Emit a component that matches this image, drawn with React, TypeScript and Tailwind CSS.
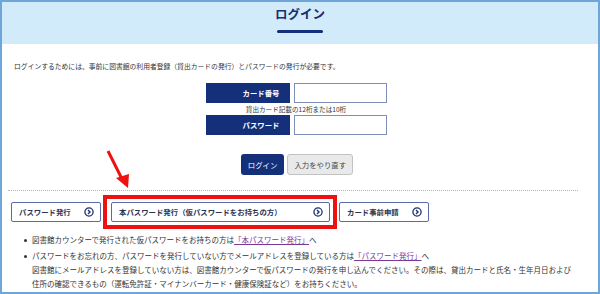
import { ReactNode } from "react";

const navy = "bg-[#15307a]";

function CircleArrow() {
	return (
		<svg width="10" height="10" viewBox="0 0 10 10" className="shrink-0">
			<circle cx="5" cy="5" r="4.1" fill="none" stroke="#1d2f6f" strokeWidth="1.3" />
			<path d="M4 3 L6 5 L4 7" fill="none" stroke="#1d2f6f" strokeWidth="1.4" />
		</svg>
	);
}

function TabButton({ label, className }: { label: string; className: string }) {
	return (
		<div
			className={`h-[20px] flex items-center justify-between border border-[#5a6aa8] rounded-[2px] bg-white pl-[7px] pr-[6px] ${className}`}
		>
			<span className="text-[7.4px] font-bold text-[#2b3352]">{label}</span>
			<CircleArrow />
		</div>
	);
}

function FormRow({ label }: { label: string }) {
	return (
		<div className="flex items-center gap-[4px]">
			<div className={`w-[84px] h-[20px] ${navy} flex items-center justify-end pr-[10px]`}>
				<span className="text-[7.4px] font-bold text-white">{label}</span>
			</div>
			<div className="w-[93px] h-[20px] border border-[#7d8fb8] bg-white" />
		</div>
	);
}

function Bullet({ children }: { children: ReactNode }) {
	return (
		<li className="flex gap-[5px]">
			<span className="w-[3px] h-[3px] rounded-full bg-[#333] mt-[6px] shrink-0" />
			<div>{children}</div>
		</li>
	);
}

function Link({ children }: { children: ReactNode }) {
	return <span className="text-[#7b3a96] underline">{children}</span>;
}

export default function App() {
	return (
		<div
			className="w-[600px] h-[294px] overflow-hidden bg-white border-2 border-[#6ea6da] text-[#333] flex flex-col"
			style={{ fontFamily: '"Noto Sans CJK JP", "Noto Sans", sans-serif' }}
		>
			{/* Header */}
			<div className="h-[42px] bg-[#d1ebfb] flex flex-col items-center pt-[3px] shrink-0">
				<h1 className="text-[12.5px] font-bold text-[#1a2f6e] leading-[18px]">ログイン</h1>
				<div className="w-[46px] h-[3px] rounded-full bg-[#15307a] mt-[7px]" />
			</div>

			<p className="text-[6.8px] leading-[10px] mt-[17px] ml-[12px]">
				ログインするためには、事前に図書館の利用者登録（貸出カードの発行）とパスワードの発行が必要です。
			</p>

			{/* Form */}
			<div className="flex flex-col items-center mt-[12px] ml-[-8px]">
				<FormRow label="カード番号" />
				<p className="text-[6.6px] leading-[10px] my-[1px]">貸出カード記載の12桁または10桁</p>
				<FormRow label="パスワード" />
				<div className="flex gap-[3px] mt-[19px] ml-[2px]">
					<button className={`h-[21px] px-[7px] rounded-[3px] ${navy} text-white text-[7.4px]`}>
						ログイン
					</button>
					<button className="h-[21px] px-[6px] rounded-[3px] bg-[#e9e9e9] border border-[#c2c2c2] text-[#444] text-[7.4px]">
						入力をやり直す
					</button>
				</div>
			</div>

			{/* Divider */}
			<div className="ml-[6px] mr-[20px] mt-[15px] border-t border-dotted border-[#a9b8cf]" />

			{/* Tabs */}
			<div className="relative flex items-center mt-[11px] ml-[9px]">
				<TabButton label="パスワード発行" className="w-[90px]" />
				<TabButton label="本パスワード発行（仮パスワードをお持ちの方）" className="w-[219px] ml-[10px]" />
				<TabButton label="カード事前申請" className="w-[90px] ml-[9px]" />
				{/* highlight annotation */}
				<div className="absolute left-[92px] top-[-7px] w-[234px] h-[34px] border-[4px] border-[#ee1111]" />
				<svg
					className="absolute left-[94px] top-[-53px]"
					width="30"
					height="44"
					viewBox="0 0 30 44"
				>
					<path d="M3 2 L17 30" stroke="#ee1111" strokeWidth="3" />
					<path d="M11 29 L24 25 L23 39 Z" fill="#ee1111" />
				</svg>
			</div>

			{/* Notes */}
			<ul className="text-[7.5px] leading-[14px] mt-[11px] ml-[22px] flex flex-col gap-[2px]">
				<Bullet>
					図書館カウンターで発行された仮パスワードをお持ちの方は<Link>「本パスワード発行」</Link>へ
				</Bullet>
				<Bullet>
					パスワードをお忘れの方、パスワードを発行していない方でメールアドレスを登録している方は
					<Link>「パスワード発行」</Link>へ
					<br />
					図書館にメールアドレスを登録していない方は、図書館カウンターで仮パスワードの発行を申し込んでください。その際は、貸出カードと氏名・生年月日および
					<br />
					住所の確認できるもの（運転免許証・マイナンバーカード・健康保険証など）をお持ちください。
				</Bullet>
			</ul>
		</div>
	);
}
